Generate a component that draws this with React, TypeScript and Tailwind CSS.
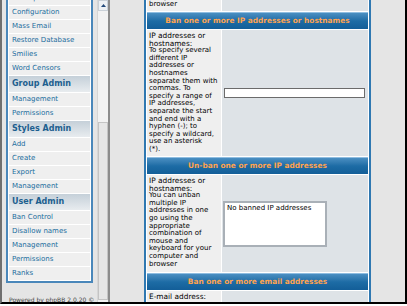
import React from 'react';

interface NavGroup {
  title: string | null;
  items: string[];
}

const navGroups: NavGroup[] = [
  { title: null, items: ['Backup Database', 'Configuration', 'Mass Email', 'Restore Database', 'Smilies', 'Word Censors'] },
  { title: 'Group Admin', items: ['Management', 'Permissions'] },
  { title: 'Styles Admin', items: ['Add', 'Create', 'Export', 'Management'] },
  { title: 'User Admin', items: ['Ban Control', 'Disallow names', 'Management', 'Permissions', 'Ranks'] },
];

const banIpText = [
  'To specify several',
  'different IP',
  'addresses or',
  'hostnames',
  'separate them with',
  'commas. To',
  'specify a range of',
  'IP addresses,',
  'separate the start',
  'and end with a',
  'hyphen (-); to',
  'specify a wildcard,',
  'use an asterisk',
  '(*).',
];

const unbanIpText = [
  'You can unban',
  'multiple IP',
  'addresses in one',
  'go using the',
  'appropriate',
  'combination of',
  'mouse and',
  'keyboard for your',
  'computer and',
  'browser',
];

const Lines = ({ lines, className }: { lines: string[]; className: string }) => (
  <div className={className}>
    {lines.map((l, i) => (
      <div key={i} className="whitespace-nowrap">{l}</div>
    ))}
  </div>
);

const CatHead = ({ children }: { children: React.ReactNode }) => (
  <div className="h-[17px] flex items-center justify-center bg-gradient-to-b from-[#4a8fc2] via-[#1d6ca5] to-[#135e98] border-t border-[#8fbde0] text-[7.4px] font-bold text-[#FFA34F] whitespace-nowrap">
    {children}
  </div>
);

const Label = ({ children }: { children: React.ReactNode }) => (
  <div className="text-[7.4px] leading-[7.6px] text-black whitespace-nowrap">{children}</div>
);

export default function App() {
  return (
    <div className="w-[407px] h-[306px] bg-white font-['DejaVu_Sans',sans-serif]">
      <div className="h-[304px] flex overflow-hidden border-l-2 border-l-[#6f6f6f] border-r-2 border-r-black border-b-2 border-b-black">
        {/* Left nav frame */}
        <div className="w-[106px] flex bg-[#E5E5E5]">
          <div className="w-[95px] flex flex-col">
            <div className="ml-[4px] w-[87px] mt-[-9px] flex flex-col gap-px p-px bg-white border-x-2 border-b-2 border-[#4a87ba]">
              {navGroups.map((g, gi) => (
                <React.Fragment key={gi}>
                  {g.title && (
                    <div className="h-[16px] flex items-center pl-[3px] bg-gradient-to-b from-[#c5d0d9] to-[#e8ecef] text-[8px] font-bold text-[#1d5f8f] whitespace-nowrap">
                      {g.title}
                    </div>
                  )}
                  {g.items.map((item, ii) => (
                    <div key={ii} className="h-[13px] flex items-center pl-[3px] bg-[#EFEFEF] text-[7px] text-[#1b6d9e] whitespace-nowrap">
                      {item}
                    </div>
                  ))}
                </React.Fragment>
              ))}
            </div>
            <div className="mt-[13px] pl-[7px] text-[6px] leading-[7.6px] text-[#444] whitespace-nowrap">
              Powered by phpBB 2.0.20 &copy;
            </div>
          </div>

          {/* Scrollbar */}
          <div className="w-[11px] flex flex-col bg-[#f2f2f2] border-l border-[#d6d6d6]">
            <div className="h-[11px] flex items-center justify-center bg-[#eef1f4] border border-[#c9d0d7]">
              <svg width="5" height="3" viewBox="0 0 5 3">
                <polygon points="2.5,0 5,3 0,3" fill="#23497a" />
              </svg>
            </div>
            <div className="h-[111px]" />
            <div className="flex-1 mb-[2px] bg-[#e6e6e6] border border-[#c4c4c4]" />
          </div>
        </div>

        <div className="w-[2px] bg-[#8c8c8c]" />

        {/* Main frame */}
        <div className="flex-1 bg-[#E5E5E5] overflow-hidden">
          <div className="ml-[34px] w-[227px] mt-[-30px] flex flex-col gap-px p-px bg-white border-x-2 border-[#2f78b1]">
            {/* previous row (cut off) */}
            <div className="h-[40px] flex gap-px">
              <div className="w-[74px] flex flex-col justify-end pb-[2px] pl-[2px] bg-[#EFEFEF]">
                <Lines lines={['mouse and', 'keyboard for your', 'computer and', 'browser']} className="text-[7px] leading-[7.6px] text-black" />
              </div>
              <div className="flex-1 bg-[#DEE3E7]" />
            </div>

            <CatHead>Ban one or more IP addresses or hostnames</CatHead>

            <div className="h-[126px] flex gap-px">
              <div className="w-[74px] pt-[2px] pl-[2px] bg-[#EFEFEF]">
                <Label>IP addresses or</Label>
                <Label>hostnames:</Label>
                <Lines lines={banIpText} className="text-[7px] leading-[7.6px] text-black" />
              </div>
              <div className="flex-1 flex items-center pl-[2px] bg-[#DEE3E7]">
                <div className="w-[141px] h-[10px] bg-white border border-[#6b6b6b]" />
              </div>
            </div>

            <CatHead>Un-ban one or more IP addresses</CatHead>

            <div className="h-[97px] flex gap-px">
              <div className="w-[74px] pt-[2px] pl-[2px] bg-[#EFEFEF]">
                <Label>IP addresses or</Label>
                <Label>hostnames:</Label>
                <Lines lines={unbanIpText} className="text-[7px] leading-[7.6px] text-black" />
              </div>
              <div className="flex-1 flex items-center pl-px bg-[#DEE3E7]">
                <div className="w-[104px] h-[46px] pt-[2px] pl-[2px] bg-white border-2 border-[#a9b0b7] text-[7px] leading-[7.6px] text-black whitespace-nowrap">
                  No banned IP addresses
                </div>
              </div>
            </div>

            <CatHead>Ban one or more email addresses</CatHead>

            <div className="h-[30px] flex gap-px">
              <div className="w-[74px] pt-[2px] pl-[2px] bg-[#EFEFEF]">
                <Label>E-mail address:</Label>
              </div>
              <div className="flex-1 bg-[#DEE3E7]" />
            </div>
          </div>
        </div>
      </div>
    </div>
  );
}
